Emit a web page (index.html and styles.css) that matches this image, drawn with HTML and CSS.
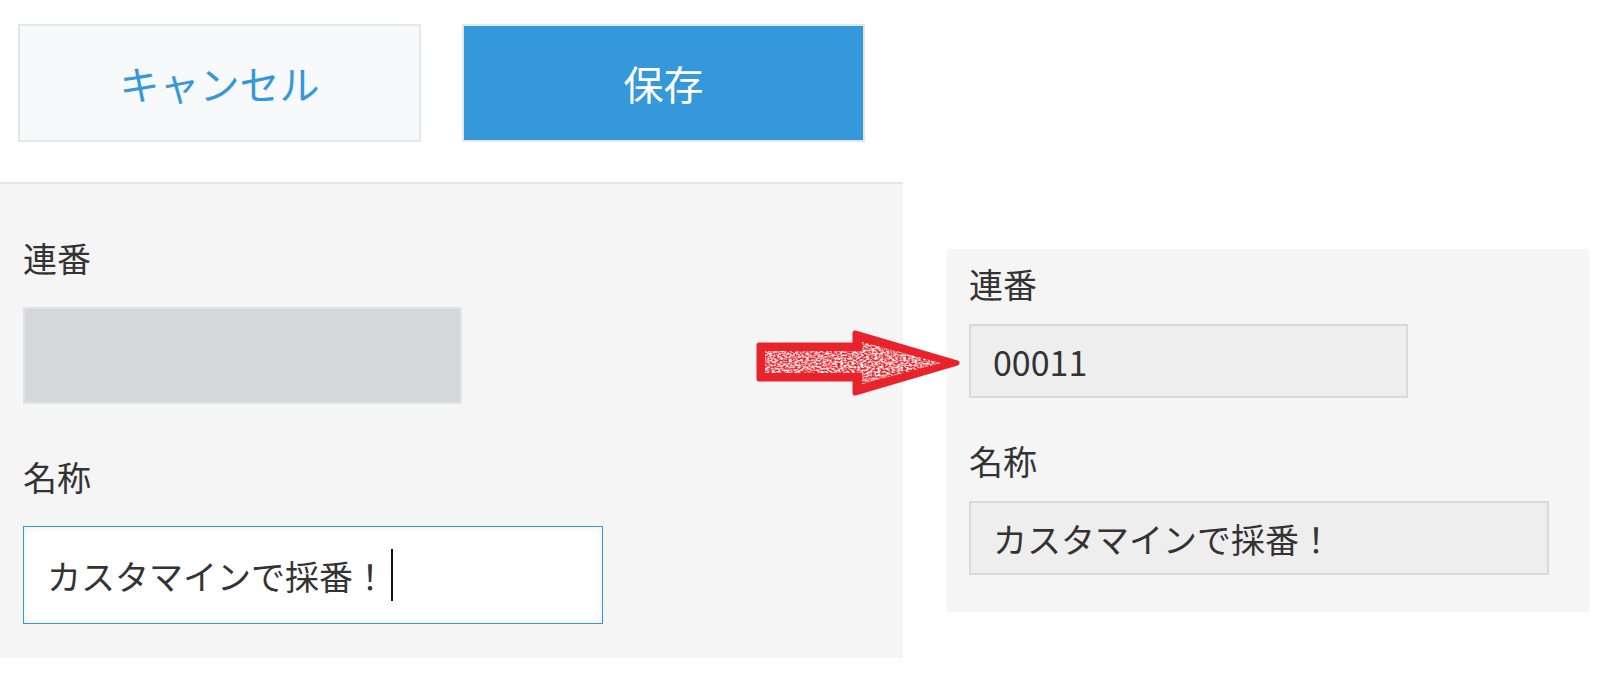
FILE: index.html
```html
<!doctype html>
<html lang="ja">
  <head>
    <meta charset="UTF-8" />
    <title>連番 採番</title>
    <link rel="stylesheet" href="styles.css">
  </head>
  <body>
    <div class="page">
      <div class="edit-side">
        <div class="toolbar">
          <button class="tool-btn cancel-btn">キャンセル</button>
          <button class="tool-btn save-btn">保存</button>
        </div>
        <div class="form-panel edit-panel">
          <div class="field">
            <div class="label">連番</div>
            <div class="box box-disabled"></div>
          </div>
          <div class="field">
            <div class="label">名称</div>
            <div class="box box-focus">カスタマインで採番！<span class="caret"></span></div>
          </div>
        </div>
      </div>

      <div class="form-panel view-panel">
        <div class="field">
          <div class="label">連番</div>
          <div class="box box-readonly box-number">00011</div>
        </div>
        <div class="field">
          <div class="label">名称</div>
          <div class="box box-readonly box-name">カスタマインで採番！</div>
        </div>
      </div>

      <!-- annotation arrow -->
      <svg class="arrow" width="206" height="66" viewBox="0 0 206 66">
        <defs>
          <filter id="speckle" x="0" y="0" width="100%" height="100%">
            <feTurbulence type="fractalNoise" baseFrequency="0.35 0.6" numOctaves="3" seed="7" />
            <feColorMatrix type="matrix" values="0 0 0 0 1  0 0 0 0 1  0 0 0 0 1  0 0 0 2.6 -0.85" />
            <feComposite in2="SourceGraphic" operator="in" />
          </filter>
        </defs>
        <polygon points="4,15 100,15 100,3 202,33 100,63 100,49 4,49" fill="#e8232b" stroke="#e8232b" stroke-width="5" stroke-linejoin="round" />
        <polygon points="10,21 107,21 107,12 186,33 107,54 107,43 10,43" fill="#000" filter="url(#speckle)" />
      </svg>
    </div>
  </body>
</html>
```

FILE: styles.css
```css
body {
  margin: 0;
  background-color: #fff;
  font-family: "Noto Sans CJK JP", "Liberation Sans", sans-serif;
  color: #333;
}
.page {
  position: relative;
  display: flex;
  align-items: flex-start;
  width: 1600px;
  height: 673px;
  overflow: hidden;
}
.edit-side {
  width: 903px;
  flex-shrink: 0;
}
.toolbar {
  display: flex;
  gap: 41px;
  height: 158px;
  padding: 24px 0 0 18px;
  box-sizing: content-box;
  border-bottom: 2px solid #e3e6e8;
}
.tool-btn {
  width: 403px;
  height: 118px;
  border: 2px solid #e3e7e8;
  font-family: inherit;
  font-size: 40px;
  padding: 0;
  cursor: pointer;
}
.cancel-btn {
  background-color: #f7f9fa;
  color: #3498db;
}
.save-btn {
  background-color: #3498db;
  color: #fff;
}
.form-panel {
  background-color: #f5f5f5;
  box-sizing: border-box;
}
.edit-panel {
  height: 474px;
  padding: 49px 0 0 23px;
}
.edit-panel .field + .field {
  margin-top: 48px;
}
.edit-panel .label {
  margin-bottom: 24px;
}
.view-panel {
  width: 642px;
  margin: 249px 0 0 44px;
  height: 363px;
  padding: 10px 0 0 22px;
}
.view-panel .field + .field {
  margin-top: 38px;
}
.view-panel .label {
  margin-bottom: 15px;
}
.label {
  font-size: 34px;
  line-height: 50px;
  height: 50px;
}
.box {
  display: flex;
  align-items: center;
  box-sizing: border-box;
  font-size: 34px;
  padding-left: 22px;
}
.box-disabled {
  width: 439px;
  height: 97px;
  background-color: #d4d8d9;
  border: 2px solid #e1e4e4;
}
.box-focus {
  width: 580px;
  height: 98px;
  background-color: #fff;
  border: 1px solid #3498db;
  box-shadow: inset 0 0 8px rgba(0, 0, 0, 0.08);
  padding-left: 23px;
}
.caret {
  display: inline-block;
  width: 2px;
  height: 52px;
  margin-left: 4px;
  background-color: #111;
}
.box-readonly {
  height: 74px;
  background-color: #eeeeee;
  border: 2px solid #d9d9d9;
}
.box-number {
  width: 439px;
}
.box-name {
  width: 580px;
}
.arrow {
  position: absolute;
  left: 755px;
  top: 330px;
}
```
